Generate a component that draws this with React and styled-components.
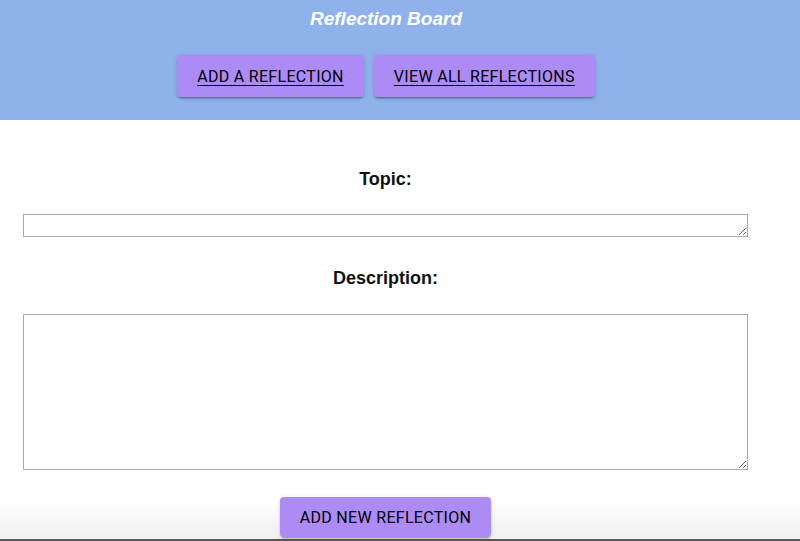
import React from 'react';
import styled, { createGlobalStyle } from 'styled-components';

const GlobalStyle = createGlobalStyle`
  html, body {
    margin: 0;
    padding: 0;
    background: #ffffff;
    overflow: hidden;
  }
  body {
    font-family: 'Liberation Sans', Arial, sans-serif;
  }
`;

const Page = styled.div`
  width: 800px;
  height: 541px;
  position: relative;
  overflow: hidden;
`;

const Header = styled.header`
  background-color: #8fb1ec;
  height: 120px;
  padding: 8px 28px 0 0;
  box-sizing: border-box;
  display: flex;
  flex-direction: column;
  align-items: center;
`;

const Title = styled.h1`
  margin: 0;
  font-family: 'Liberation Sans', Arial, sans-serif;
  font-size: 19px;
  font-style: italic;
  font-weight: bold;
  color: #ffffff;
  line-height: 21px;
`;

const NavRow = styled.nav`
  display: flex;
  gap: 10px;
  margin-top: 26px;
`;

const Button = styled.button`
  position: relative;
  z-index: 1;
  background-color: #ad8bf7;
  border: none;
  border-radius: 4px;
  height: ${(p) => p.height || '42px'};
  padding: 0 20px;
  font-family: Roboto, 'Liberation Sans', sans-serif;
  font-size: 16px;
  font-weight: 400;
  letter-spacing: 0.3px;
  color: #000;
  text-transform: uppercase;
  text-decoration: ${(p) => (p.underline ? 'underline' : 'none')};
  text-underline-offset: 3px;
  box-shadow: 0 3px 1px -2px rgba(0, 0, 0, 0.2), 0 2px 2px 0 rgba(0, 0, 0, 0.14),
    0 1px 5px 0 rgba(0, 0, 0, 0.12);
  cursor: pointer;
`;

const Form = styled.form`
  padding: 0 52px 0 23px;
  display: flex;
  flex-direction: column;
  align-items: center;
`;

const Label = styled.label`
  font-family: 'Liberation Sans', Arial, sans-serif;
  font-size: 18px;
  font-weight: bold;
  color: #111;
  line-height: 21px;
  margin-top: ${(p) => p.top};
  margin-bottom: ${(p) => p.bottom};
`;

const TextArea = styled.textarea`
  display: block;
  width: 100%;
  height: ${(p) => p.height};
  box-sizing: border-box;
  border: 1px solid #aaaaaa;
  border-radius: 0;
  margin: 0;
  padding: 2px;
  font-family: 'Liberation Sans', Arial, sans-serif;
  font-size: 13px;
`;

const SubmitRow = styled.div`
  margin-top: 27px;
`;

const ScreenEdge = styled.div`
  position: absolute;
  left: 0;
  right: 0;
  bottom: 0;
  height: 38px;
  pointer-events: none;
  background: linear-gradient(to bottom, rgba(235, 235, 235, 0) 0%, rgba(235, 235, 235, 0.7) 90%);
  border-bottom: 2px solid #5a565c;
`;

export default function App() {
  return (
    <Page>
      <GlobalStyle />
      <Header>
        <Title>Reflection Board</Title>
        <NavRow>
          <Button type="button" underline>Add a Reflection</Button>
          <Button type="button" underline>View all Reflections</Button>
        </NavRow>
      </Header>
      <Form onSubmit={(e) => e.preventDefault()}>
        <Label htmlFor="topic" top="49px" bottom="24px">Topic:</Label>
        <TextArea id="topic" height="23px" />
        <Label htmlFor="description" top="31px" bottom="25px">Description:</Label>
        <TextArea id="description" height="156px" />
        <SubmitRow>
          <Button type="submit" height="40px">Add New Reflection</Button>
        </SubmitRow>
      </Form>
      <ScreenEdge />
    </Page>
  );
}
